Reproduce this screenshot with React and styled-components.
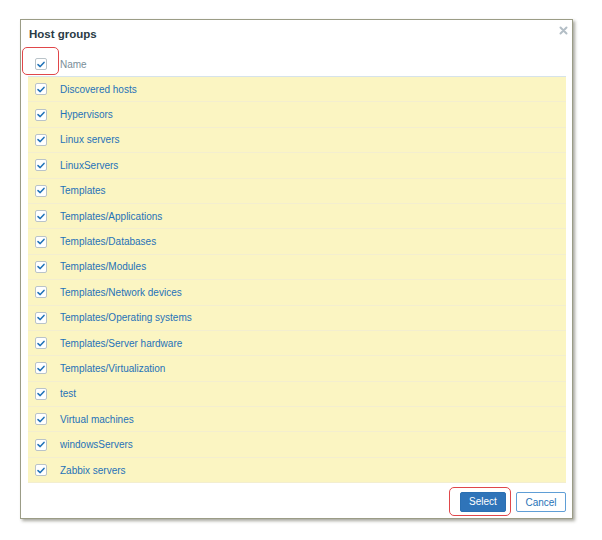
import React from 'react';
import styled, { createGlobalStyle } from 'styled-components';

const GlobalStyle = createGlobalStyle`
  html, body {
    margin: 0;
    padding: 0;
    background: #ffffff;
    font-family: "Liberation Sans", Arial, sans-serif;
  }
`;

const Page = styled.div`
  width: 602px;
  height: 540px;
  padding: 19px 0 0 20px;
  box-sizing: border-box;
`;

const Dialog = styled.div`
  position: relative;
  width: 553px;
  height: 500px;
  box-sizing: border-box;
  border: 1px solid #9b9c86;
  box-shadow: 2px 2px 3px rgba(60, 60, 40, 0.45);
  background: #ffffff;
  padding: 0 6px 0 7px;
  display: flex;
  flex-direction: column;
`;

const Close = styled.div`
  position: absolute;
  top: 1px;
  right: 4px;
  width: 9px;
  height: 9px;
`;

const Title = styled.div`
  height: 28px;
  padding: 8px 0 0 1px;
  box-sizing: border-box;
  font-size: 11.5px;
  font-weight: bold;
  color: #2a3b45;
`;

const HeaderRow = styled.div`
  height: 29px;
  padding-top: 4px;
  display: flex;
  align-items: center;
  border-bottom: 1px solid #d6e3ea;
  box-sizing: border-box;
`;

const Row = styled.div`
  height: 25.4px;
  display: flex;
  align-items: center;
  background: #fbf5c2;
  border-bottom: 1px solid #f3eecf;
  box-sizing: border-box;
`;

const CheckCell = styled.div`
  position: relative;
  width: 32px;
  padding-left: 7px;
  box-sizing: border-box;
  display: flex;
  align-items: center;
`;

const Box = styled.span`
  width: 12px;
  height: 12px;
  box-sizing: border-box;
  border: 1px solid #b9c3c9;
  border-radius: 2px;
  background: #ffffff;
  display: flex;
  align-items: center;
  justify-content: center;
`;

const Highlight = styled.div`
  position: absolute;
  border: 1.5px solid #e0474a;
  border-radius: 5px;
  box-sizing: border-box;
  pointer-events: none;
`;

const HeadHighlight = styled(Highlight)`
  left: -6px;
  top: -11px;
  width: 37px;
  height: 28px;
`;

const NameHead = styled.span`
  font-size: 10px;
  color: #7a8e99;
`;

const Link = styled.span`
  font-size: 10px;
  color: #1f72b8;
`;

const Table = styled.div`
  display: flex;
  flex-direction: column;
`;

const Footer = styled.div`
  flex: 1;
  display: flex;
  justify-content: flex-end;
  align-items: flex-start;
  gap: 10px;
  padding-top: 8px;
`;

const BtnWrap = styled.div`
  position: relative;
`;

const Button = styled.button`
  height: 20px;
  box-sizing: border-box;
  padding: 0;
  width: ${(p) => (p.$primary ? '46px' : '50px')};
  margin-top: ${(p) => (p.$primary ? '0' : '1px')};
  font-family: "Liberation Sans", Arial, sans-serif;
  font-size: 10px;
  border-radius: 2px;
  border: 1px solid ${(p) => (p.$primary ? '#2a6fb2' : '#5f9ed6')};
  background: ${(p) => (p.$primary ? '#2f74b9' : '#ffffff')};
  color: ${(p) => (p.$primary ? '#ffffff' : '#1f72b8')};
`;

const BtnHighlight = styled(Highlight)`
  left: -11px;
  top: -4px;
  right: -5px;
  bottom: -4px;
`;

const groups = [
  'Discovered hosts',
  'Hypervisors',
  'Linux servers',
  'LinuxServers',
  'Templates',
  'Templates/Applications',
  'Templates/Databases',
  'Templates/Modules',
  'Templates/Network devices',
  'Templates/Operating systems',
  'Templates/Server hardware',
  'Templates/Virtualization',
  'test',
  'Virtual machines',
  'windowsServers',
  'Zabbix servers',
];

const Check = () => (
  <Box>
    <svg width="8" height="7" viewBox="0 0 8 7">
      <path d="M1 3.6 L3.2 5.6 L7 1.4" fill="none" stroke="#1f72b8" strokeWidth="1.5" strokeLinecap="round" strokeLinejoin="round" />
    </svg>
  </Box>
);

const App = () => {
  return (
    <Page>
      <GlobalStyle />
      <Dialog>
        <Close>
          <svg width="9" height="9" viewBox="0 0 9 9">
            <path d="M1.5 1.5 L7.5 7.5 M7.5 1.5 L1.5 7.5" stroke="#b3bec6" strokeWidth="2" strokeLinecap="round" />
          </svg>
        </Close>
        <Title>Host groups</Title>
        <HeaderRow>
          <CheckCell>
            <HeadHighlight />
            <Check />
          </CheckCell>
          <NameHead>Name</NameHead>
        </HeaderRow>
        <Table>
          {groups.map((g) => (
            <Row key={g}>
              <CheckCell>
                <Check />
              </CheckCell>
              <Link>{g}</Link>
            </Row>
          ))}
        </Table>
        <Footer>
          <BtnWrap>
            <BtnHighlight />
            <Button $primary>Select</Button>
          </BtnWrap>
          <Button>Cancel</Button>
        </Footer>
      </Dialog>
    </Page>
  );
};

export default App;
